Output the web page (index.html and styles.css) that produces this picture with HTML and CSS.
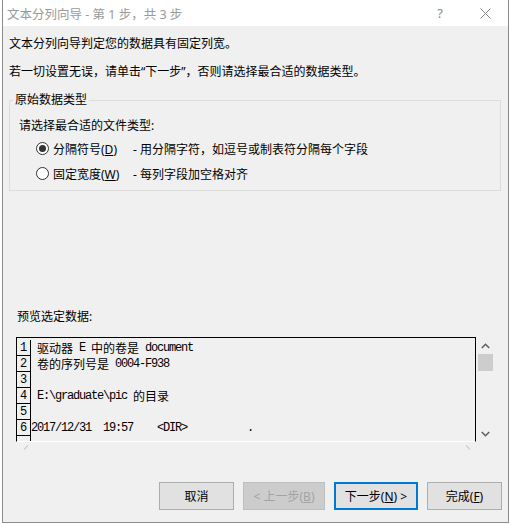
FILE: index.html
```html
<!DOCTYPE html>
<html lang="zh-CN">
<head>
<meta charset="utf-8">
<title>文本分列向导</title>
<link rel="stylesheet" href="styles.css">
</head>
<body>
<div class="dialog">
  <div class="titlebar">
    <span class="title">文本分列向导 - 第 1 步，共 3 步</span>
    <span class="help">?</span>
    <span class="close"><svg width="11" height="11" viewBox="0 0 11 11"><path d="M0.5 0.5 L10.5 10.5 M10.5 0.5 L0.5 10.5" stroke="#8a8a8a" stroke-width="1" fill="none"/></svg></span>
  </div>
  <div class="content">
    <div class="line first">文本分列向导判定您的数据具有固定列宽。</div>
    <div class="line second">若一切设置无误，请单击“下一步”，否则请选择最合适的数据类型。</div>
    <fieldset class="group">
      <legend class="legend">原始数据类型</legend>
      <div class="prompt">请选择最合适的文件类型:</div>
      <div class="radio-row">
        <span class="radio checked"></span>
        <span class="rlabel">分隔符号(<u>D</u>)</span>
        <span class="rdesc">- 用分隔字符，如逗号或制表符分隔每个字段</span>
      </div>
      <div class="radio-row">
        <span class="radio"></span>
        <span class="rlabel">固定宽度(<u>W</u>)</span>
        <span class="rdesc">- 每列字段加空格对齐</span>
      </div>
    </fieldset>
    <div class="preview-label">预览选定数据:</div>
    <div class="preview">
      <div class="pbox">
        <div class="prow"><span class="num">1</span><span class="txt"> <span class="c">驱动器</span> E <span class="c">中的卷是</span> document</span></div>
        <div class="prow"><span class="num">2</span><span class="txt"> <span class="c">卷的序列号是</span> 0004-F938</span></div>
        <div class="prow"><span class="num">3</span><span class="txt"></span></div>
        <div class="prow"><span class="num">4</span><span class="txt"> E:\graduate\pic <span class="c">的目录</span></span></div>
        <div class="prow"><span class="num">5</span><span class="txt"></span></div>
        <div class="prow"><span class="num">6</span><span class="txt">2017/12/31  19:57    &lt;DIR&gt;          .</span></div>
        <div class="prow"><span class="num"></span><span class="txt"></span></div>
      </div>
      <div class="vscroll">
        <span class="arrow"><svg width="9" height="6" viewBox="0 0 9 6"><path d="M0.8 5 L4.5 1.3 L8.2 5" stroke="#606060" stroke-width="1.6" fill="none"/></svg></span>
        <span class="thumb"></span>
        <span class="spacer"></span>
        <span class="arrow"><svg width="9" height="6" viewBox="0 0 9 6"><path d="M0.8 1 L4.5 4.7 L8.2 1" stroke="#606060" stroke-width="1.6" fill="none"/></svg></span>
      </div>
    </div>
    <div class="hscroll">
      <svg width="6" height="8" viewBox="0 0 6 8"><path d="M5 0.5 L1 4.5" stroke="#cfcfcf" stroke-width="1.2" fill="none"/></svg>
      <svg width="6" height="8" viewBox="0 0 6 8"><path d="M1 0.5 L5 4.5" stroke="#cfcfcf" stroke-width="1.2" fill="none"/></svg>
    </div>
    <div class="buttons">
      <button class="btn cancel">取消</button>
      <button class="btn back" disabled>&lt; 上一步(<u>B</u>)</button>
      <button class="btn next">下一步(<u>N</u>) &gt;</button>
      <button class="btn finish">完成(<u>F</u>)</button>
    </div>
  </div>
</div>
</body>
</html>
```
FILE: styles.css
```css
* { box-sizing: border-box; }
html, body { margin: 0; padding: 0; }
body {
  width: 511px;
  height: 524px;
  overflow: hidden;
  background: #ffffff;
  font-family: "Noto Sans", "Noto Sans CJK SC", sans-serif;
  font-size: 12px;
  color: #000;
}
.dialog {
  margin-left: 2px;
  width: 507px;
  height: 523px;
  border: 1px solid #8c8c8c;
  border-top: 0;
  background: #f0f0f0;
  display: flex;
  flex-direction: column;
}
.titlebar {
  height: 26px;
  flex: none;
  background: #fff;
  display: flex;
  align-items: center;
  padding-left: 4px;
  color: #9a9a9a;
  font-size: 12.5px;
}
.title { flex: 1; white-space: pre; }
.help {
  width: 44px;
  text-align: center;
  font-size: 13px;
  color: #8a8a8a;
}
.close {
  width: 46px;
  display: flex;
  justify-content: center;
  align-items: center;
}
.content {
  flex: 1;
  display: flex;
  flex-direction: column;
}
.line { line-height: 20px; margin-left: 6px; }
.first { margin-top: 8px; }
.second { margin-top: 8px; }
.group {
  margin: 10px 7px 0 6px;
  padding: 0 0 4px 0;
  border: 1px solid #dcdcdc;
  min-width: 0;
}
.legend {
  margin-left: 3px;
  padding: 0 2px;
  line-height: 16px;
}
.prompt {
  padding-left: 9px;
  margin-top: 8px;
  line-height: 20px;
}
.radio-row {
  height: 25px;
  display: flex;
  align-items: center;
  padding-left: 26px;
}
.radio {
  width: 13px;
  height: 13px;
  border: 1px solid #333;
  border-radius: 50%;
  background: #fff;
  margin-right: 4px;
  display: flex;
  align-items: center;
  justify-content: center;
}
.radio.checked::after {
  content: "";
  width: 7px;
  height: 7px;
  border-radius: 50%;
  background: #333;
}
.rlabel { width: 80px; }
.preview-label {
  margin: 116px 0 0 14px;
  line-height: 20px;
}
.preview {
  margin: 10px 0 0 13px;
  display: flex;
  height: 105px;
}
.pbox {
  width: 460px;
  height: 105px;
  border: 1px solid #000;
  border-bottom-color: #fff;
  padding-top: 2px;
  overflow: hidden;
  font-family: "Liberation Mono", "Noto Sans CJK SC", monospace;
  font-size: 12px;
  letter-spacing: -1.2px;
}
.prow {
  height: 16px;
  display: flex;
  line-height: 16px;
}
.num {
  width: 14px;
  flex: none;
  border-right: 1px solid #000;
  border-bottom: 1px solid #000;
  padding-left: 3px;
}
.txt { white-space: pre; height: 16px; }
.c {
  display: inline-block;
  vertical-align: top;
  height: 16px;
  line-height: 16px;
  overflow: hidden;
  font-family: "Noto Sans CJK SC", sans-serif;
  font-size: 12px;
  letter-spacing: 0;
}
.vscroll {
  width: 17px;
  margin-left: 1px;
  display: flex;
  flex-direction: column;
  align-items: center;
}
.arrow {
  height: 17px;
  display: flex;
  align-items: center;
  justify-content: center;
}
.thumb {
  width: 15px;
  height: 17px;
  background: #cdcdcd;
}
.spacer { flex: 1; }
.hscroll {
  height: 17px;
  width: 460px;
  margin-left: 13px;
  display: flex;
  justify-content: space-between;
  align-items: flex-start;
  padding: 3px 5px 0 7px;
}
.buttons {
  margin-top: 23px;
  display: flex;
  justify-content: flex-end;
  gap: 9px;
  padding-right: 6px;
}
.btn {
  height: 28px;
  width: 75px;
  font-family: "Noto Sans", "Noto Sans CJK SC", sans-serif;
  font-size: 12px;
  color: #000;
  background: #e1e1e1;
  border: 1px solid #adadad;
  padding: 0;
}
.back {
  width: 82px;
  background: #cccccc;
  border-color: #bfbfbf;
  color: #a3a3a3;
}
.next {
  width: 84px;
  border: 2px solid #0078d7;
}
```
